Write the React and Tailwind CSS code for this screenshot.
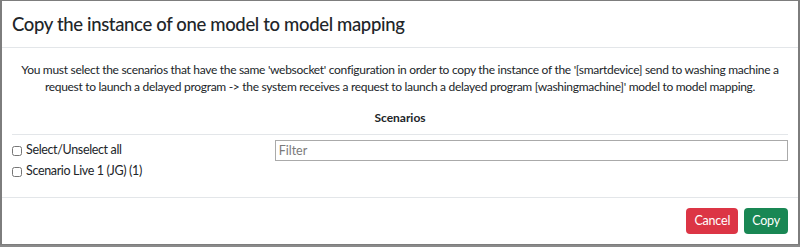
export default function App() {
  const font = { fontFamily: 'Lato, "Noto Sans", sans-serif' };
  return (
    <div className="w-[800px] h-[247px] bg-[#8a8a8a]" style={font}>
      <div className="w-[800px] h-[245px] bg-white border-t border-l-2 border-r-2 border-b border-[#7d7d7d] flex flex-col text-[#212529]">
        {/* Header */}
        <div className="h-[47px] flex items-center px-[10px] border-b border-[#e3e6e9] shrink-0">
          <h5 className="text-[18.5px] tracking-[-0.35px] font-medium leading-none">Copy the instance of one model to model mapping</h5>
        </div>

        {/* Body */}
        <div className="h-[149px] px-[10px] pt-[13px] shrink-0">
          <p className="text-center text-[12px] tracking-[-0.3px] leading-[17px]">
            <span className="block whitespace-nowrap">
              You must select the scenarios that have the same 'websocket' configuration in order to copy the instance of the '[smartdevice] send to washing machine a
            </span>
            <span className="block whitespace-nowrap">
              request to launch a delayed program -&gt; the system receives a request to launch a delayed program [washingmachine]' model to model mapping.
            </span>
          </p>
          <div className="text-center text-[12px] font-bold mt-[14px] leading-[17px]">Scenarios</div>
          <div className="border-t border-[#e3e6e9] mt-[8px]" />
          <div className="grid grid-cols-3 gap-x-[12px] mt-[2px]">
            <div className="col-span-1 flex flex-col gap-[4px] text-[12.5px] tracking-[-0.35px] pt-[5px]">
              <label className="flex items-center gap-[4px] h-[17px]">
                <input type="checkbox" className="w-[10px] h-[10px] m-0" />
                <span>Select/Unselect all</span>
              </label>
              <label className="flex items-center gap-[4px] h-[17px]">
                <input type="checkbox" className="w-[10px] h-[10px] m-0" />
                <span>Scenario Live 1 (JG) (1)</span>
              </label>
            </div>
            <div className="col-span-2">
              <input
                type="text"
                placeholder="Filter"
                className="w-full h-[21px] border border-[#aaaaaa] px-[3px] text-[12.5px] placeholder-[#7a7a7a] outline-none"
              />
            </div>
          </div>
        </div>

        {/* Footer */}
        <div className="flex-1 border-t border-[#e3e6e9] flex items-center justify-end gap-[6px] px-[10px]">
          <button className="h-[26px] px-[8px] rounded-[4px] bg-[#dc3545] text-white text-[12.5px] tracking-[-0.2px]">Cancel</button>
          <button className="h-[26px] px-[8px] rounded-[4px] bg-[#198754] text-white text-[12.5px] tracking-[-0.2px]">Copy</button>
        </div>
      </div>
    </div>
  );
}
